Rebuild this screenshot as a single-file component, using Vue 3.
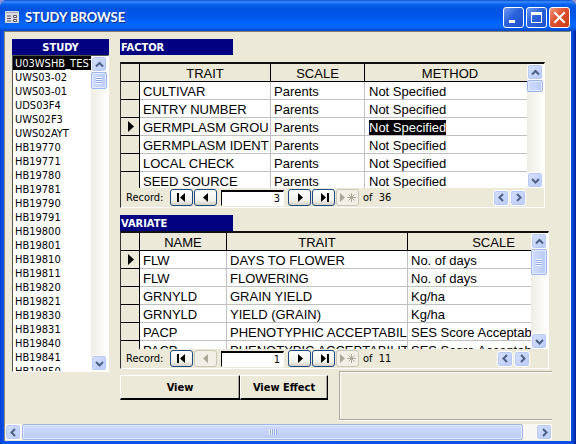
<script setup>
import { ref } from 'vue'

const studies = [
  'U03WSHB_TEST', 'UWS03-02', 'UWS03-01', 'UDS03F4', 'UWS02F3', 'UWS02AYT',
  'HB19770', 'HB19771', 'HB19780', 'HB19781', 'HB19790', 'HB19791', 'HB19800',
  'HB19801', 'HB19810', 'HB19811', 'HB19820', 'HB19821', 'HB19830', 'HB19831',
  'HB19840', 'HB19841', 'HB19850',
]
const study = ref(studies[0])

const grids = [
  {
    id: 'factor',
    title: 'FACTOR',
    columns: ['TRAIT', 'SCALE', 'METHOD'],
    rows: [
      ['CULTIVAR', 'Parents', 'Not Specified'],
      ['ENTRY NUMBER', 'Parents', 'Not Specified'],
      ['GERMPLASM GROU', 'Parents', 'Not Specified'],
      ['GERMPLASM IDENT', 'Parents', 'Not Specified'],
      ['LOCAL CHECK', 'Parents', 'Not Specified'],
      ['SEED SOURCE', 'Parents', 'Not Specified'],
    ],
    current: 2,
    selectedCell: 2,
    record: '3',
    total: 36,
    canGoBack: true,
  },
  {
    id: 'variate',
    title: 'VARIATE',
    columns: ['NAME', 'TRAIT', 'SCALE'],
    rows: [
      ['FLW', 'DAYS TO FLOWER', 'No. of days'],
      ['FLW', 'FLOWERING', 'No. of days'],
      ['GRNYLD', 'GRAIN YIELD', 'Kg/ha'],
      ['GRNYLD', 'YIELD (GRAIN)', 'Kg/ha'],
      ['PACP', 'PHENOTYPHIC ACCEPTABIL', 'SES Score Acceptab'],
      ['PACP', 'PHENOTYPIC ACCEPTABILIT', 'SES Score Acceptab'],
    ],
    current: 0,
    selectedCell: -1,
    record: '1',
    total: 11,
    canGoBack: false,
  },
]
</script>

<template>
  <main class="window">
    <header class="titlebar">
      <svg class="app-icon" viewBox="0 0 14 12" aria-hidden="true">
        <rect width="14" height="12" rx="1" fill="#dcdce0" />
        <path d="M1 1.500h12" stroke="#a4a4b4" />
        <path d="M2 5h4M2 7.500h4M2 10h4" stroke="#55556a" />
        <path d="M8.500 4.500h3v2h-3zM8.500 8.500h3v2h-3z" stroke="#55556a" fill="#fff" />
      </svg>
      <h1>STUDY BROWSE</h1>
      <div class="caption-buttons">
        <button type="button" aria-label="Minimize">
          <svg viewBox="0 0 17 17"><path d="M4 11h6v3H4z" fill="#fff" /></svg>
        </button>
        <button type="button" aria-label="Maximize">
          <svg viewBox="0 0 17 17"><path d="M3 3h11v11H3zM4 6v7h9V6z" fill="#fff" fill-rule="evenodd" /></svg>
        </button>
        <button type="button" class="close" aria-label="Close">
          <svg viewBox="0 0 17 17"><path d="M4 4l9 9M13 4l-9 9" stroke="#fff" stroke-width="2" stroke-linecap="square" /></svg>
        </button>
      </div>
    </header>

    <div class="client">
      <div class="columns">
        <section class="study">
          <label class="caption centered" for="study-list">STUDY</label>
          <div class="listbox">
            <select id="study-list" v-model="study" size="22">
              <option v-for="name in studies" :key="name" :value="name">{{ name }}</option>
            </select>
            <div class="vbar">
              <button type="button" class="arrow" aria-label="Scroll up">
                <svg viewBox="0 0 9 9"><path d="M1 6.500L4.500 3L8 6.500" /></svg>
              </button>
              <div class="thumb study-thumb"><i></i></div>
              <button type="button" class="arrow last" aria-label="Scroll down">
                <svg viewBox="0 0 9 9"><path d="M1 3L4.500 6.500L8 3" /></svg>
              </button>
            </div>
          </div>
        </section>

        <div class="details">
          <section v-for="grid in grids" :key="grid.id" :class="['sheet', grid.id]">
            <h2 class="caption">{{ grid.title }}</h2>
            <div class="grid-frame">
              <div class="grid-area">
                <div class="viewport">
                  <table :aria-label="grid.title">
                    <colgroup>
                      <col class="c-mark" />
                      <col class="c-one" />
                      <col class="c-two" />
                      <col class="c-three" />
                    </colgroup>
                    <thead>
                      <tr>
                        <th></th>
                        <th v-for="c in grid.columns" :key="c" scope="col">{{ c }}</th>
                      </tr>
                    </thead>
                    <tbody>
                      <tr v-for="(row, r) in grid.rows" :key="r">
                        <td class="mark">
                          <svg v-if="r === grid.current" viewBox="0 0 6 11"><path d="M0 0L6 5.500L0 11z" /></svg>
                        </td>
                        <td v-for="(cell, c) in row" :key="c">
                          <span :class="{ picked: r === grid.current && c === grid.selectedCell }">{{ cell }}</span>
                        </td>
                      </tr>
                    </tbody>
                  </table>
                </div>
                <div class="vbar">
                  <button type="button" class="arrow" aria-label="Scroll up">
                    <svg viewBox="0 0 9 9"><path d="M1 6.500L4.500 3L8 6.500" /></svg>
                  </button>
                  <div class="thumb"><i></i></div>
                  <button type="button" class="arrow last" aria-label="Scroll down">
                    <svg viewBox="0 0 9 9"><path d="M1 3L4.500 6.500L8 3" /></svg>
                  </button>
                </div>
              </div>
              <div class="recordbar">
                <label :for="grid.id + '-record'">Record:</label>
                <button type="button" class="nav" aria-label="First record">
                  <svg viewBox="0 0 14 9"><path d="M2 0h2v9H2zM10 0v9L5 4.500z" /></svg>
                </button>
                <button type="button" class="nav" aria-label="Previous record" :disabled="!grid.canGoBack">
                  <svg viewBox="0 0 14 9"><path d="M9 0v9L4 4.500z" /></svg>
                </button>
                <input :id="grid.id + '-record'" type="text" :value="grid.record" />
                <button type="button" class="nav" aria-label="Next record">
                  <svg viewBox="0 0 14 9"><path d="M5 0v9L10 4.500z" /></svg>
                </button>
                <button type="button" class="nav" aria-label="Last record">
                  <svg viewBox="0 0 14 9"><path d="M4 0v9L9 4.500zM10 0h2v9h-2z" /></svg>
                </button>
                <button type="button" class="nav" aria-label="New record" disabled>
                  <svg class="wide" viewBox="0 0 18 9">
                    <path d="M1 0v9L6 4.500z" />
                    <path d="M12.500 0v9M8 4.500h9M9.500 1.500l6 6M15.500 1.500l-6 6" fill="none" stroke="#aca899" />
                  </svg>
                </button>
                <span class="total">of&nbsp; {{ grid.total }}</span>
                <div class="hbuttons">
                  <button type="button" class="arrow" aria-label="Scroll left">
                    <svg viewBox="0 0 9 9"><path d="M6 1L2.500 4.500L6 8" /></svg>
                  </button>
                  <button type="button" class="arrow" aria-label="Scroll right">
                    <svg viewBox="0 0 9 9"><path d="M3 1L6.500 4.500L3 8" /></svg>
                  </button>
                </div>
              </div>
            </div>
          </section>

          <div class="actions">
            <div class="commands">
              <button type="button" class="view">View</button>
              <button type="button" class="effect">View Effect</button>
            </div>
            <div class="panel"></div>
          </div>
        </div>
      </div>

      <div class="hbar">
        <button type="button" class="arrow" aria-label="Scroll left">
          <svg viewBox="0 0 9 9"><path d="M6 1L2.500 4.500L6 8" /></svg>
        </button>
        <div class="thumb"><i></i></div>
        <button type="button" class="arrow" aria-label="Scroll right">
          <svg viewBox="0 0 9 9"><path d="M3 1L6.500 4.500L3 8" /></svg>
        </button>
      </div>
    </div>
  </main>
</template>

<style>
body {
  margin: 0;
  background: #8f92cf;
}
</style>

<style scoped>
* {
  box-sizing: border-box;
}
.window {
  display: flex;
  flex-direction: column;
  min-height: 100vh;
  overflow: hidden;
  border-radius: 7px 7px 0 0;
  background: linear-gradient(90deg, #0a3fd8 0, #0a56ea 4px, #0a4fe4 calc(100% - 4px), #001f9c 100%);
  font-family: "DejaVu Sans Condensed", "DejaVu Sans", sans-serif;
  font-size: 11px;
  color: #000;
}
button {
  margin: 0;
  padding: 0;
  font: inherit;
  color: inherit;
}
svg {
  display: block;
}

/* Title bar */
.titlebar {
  display: flex;
  align-items: center;
  height: 31px;
  padding: 3px 6px 0 5px;
  background: linear-gradient(#0a4fd0 0, #3a8cff 2px, #0a66ee 4px, #0054e3 8px, #0056e8 16px, #0066ff 24px, #0064fa 27px, #0048c8 31px);
}
.app-icon {
  width: 14px;
  height: 12px;
}
h1 {
  flex: 1;
  margin: 0 0 0 6px;
  font: bold 13px/16px Lato, sans-serif;
  color: #fff;
  text-shadow: 1px 1px 0 #0a2f8a;
}
.caption-buttons {
  display: flex;
  gap: 2px;
}
.caption-buttons button {
  display: grid;
  place-items: center;
  width: 21px;
  height: 21px;
  border: 1px solid #fff;
  border-radius: 3px;
  background: linear-gradient(135deg, #6f9bf5, #2a62dc 45%, #1f50cc);
}
.caption-buttons .close {
  background: linear-gradient(135deg, #f0987c, #de5030 45%, #c83c14);
}
.caption-buttons svg {
  width: 17px;
  height: 17px;
}

/* Client area */
.client {
  display: flex;
  flex: 1;
  flex-direction: column;
  margin: 0 5px 3px 4px;
  padding-bottom: 1px;
  border-top: 1px solid #7f7d73;
  border-left: 1px solid #8a8778;
  border-right: 1px solid #fff;
  background: #ece9d8;
}
.columns {
  display: flex;
  flex: 1;
  gap: 11px;
  padding: 7px 18px 4px 7px;
}
.caption {
  display: block;
  width: 113px;
  height: 16px;
  margin: 0;
  padding-left: 1px;
  background: #000080;
  font: bold 11px/17px "DejaVu Sans Condensed", "DejaVu Sans", sans-serif;
  color: #fff;
}
.caption.centered {
  width: auto;
  padding: 0;
  text-align: center;
}

/* Study list */
.study {
  width: 97px;
}
.listbox {
  display: flex;
  height: 317px;
  border: 1px solid #fff;
  border-top-color: #55534a;
  border-left-color: #55534a;
  background: #fff;
}
select {
  flex: 1;
  min-width: 0;
  height: 100%;
  padding: 0;
  border: 0;
  border-radius: 0;
  outline: 0;
  overflow: hidden;
  scrollbar-width: none;
  background: #fff;
  font: inherit;
}
option {
  height: 14px;
  min-height: 14px;
  padding: 1px 0 0 2px;
  line-height: 13px;
  overflow: hidden;
  color: #000;
}
option:checked {
  background: linear-gradient(#000, #000);
  -webkit-text-fill-color: #fff;
}

/* Scroll bars */
.vbar {
  display: flex;
  flex-direction: column;
  flex: none;
  width: 17px;
  background: linear-gradient(90deg, #eeede5, #fefefb);
}
.arrow {
  display: grid;
  place-items: center;
  flex: none;
  width: 16px;
  height: 16px;
  border: 1px solid #fff;
  border-radius: 3px;
  background: linear-gradient(135deg, #d6e0fd, #b9cbf8);
  box-shadow: inset 0 0 0 1px #b7c9f6;
}
.arrow svg {
  width: 9px;
  height: 9px;
}
.arrow path {
  fill: none;
  stroke: #4d6185;
  stroke-width: 2;
}
.arrow.last {
  margin-top: auto;
}
.thumb {
  display: grid;
  place-items: center;
  width: 16px;
  height: 12px;
  border: 1px solid #9db4ee;
  border-radius: 2px;
  background: linear-gradient(90deg, #d0dcfe, #b9cbfa);
  box-shadow: inset 0 0 0 1px #e3ebff;
}
.thumb i {
  width: 6px;
  height: 7px;
  background: repeating-linear-gradient(#f4f7ff 0 1px, #8fa9e6 1px 2px);
}
.study-thumb {
  height: 17px;
}
.factor .thumb i {
  display: none;
}
.variate .thumb {
  height: 26px;
}

/* Data sheets */
.details {
  flex: 1;
  min-width: 0;
}
.factor .grid-frame {
  margin: 7px 7px 7px 0;
}
.variate .grid-frame {
  margin: 0 3px 2px 0;
}
.grid-frame {
  border: 1px solid #fff;
  border-top: 2px solid #111;
  border-left-color: #333;
}
.grid-area {
  display: flex;
  height: 124px;
}
.variate .grid-area {
  height: 116px;
}
.viewport {
  flex: 1;
  min-width: 0;
  overflow: hidden;
  background: #fff;
}
table {
  width: calc(100% + 8px);
  table-layout: fixed;
  border-collapse: separate;
  border-spacing: 0;
  font: 13px/15px "Liberation Sans", Arial, sans-serif;
}
.variate table {
  width: calc(100% + 48px);
}
.c-mark {
  width: 19px;
}
.c-one {
  width: 131px;
}
.c-two {
  width: 94px;
}
.variate .c-one {
  width: 87px;
}
.variate .c-two {
  width: 181px;
}
th,
td {
  height: 18px;
  padding: 2px 0 0 3px;
  overflow: hidden;
  border-right: 1px solid #c0c0c0;
  border-bottom: 1px solid #c0c0c0;
  white-space: nowrap;
  text-align: left;
}
th {
  padding: 1px 0 0;
  border-color: #000;
  background: #ece9d8;
  font-weight: normal;
  text-align: center;
}
.mark {
  padding: 0 0 0 7px;
  border-color: #000;
  background: #ece9d8;
}
.mark svg {
  width: 6px;
  height: 11px;
}
th:last-child,
td:last-child {
  border-right: 0;
}
.picked {
  display: inline-block;
  height: 15px;
  vertical-align: top;
  background: #000;
  color: #fff;
}
.factor td:last-child {
  padding-left: 4px;
}

/* Record navigation */
.recordbar {
  display: flex;
  align-items: center;
  height: 19px;
  padding-right: 18px;
}
.recordbar label {
  width: 49px;
  padding-left: 5px;
  white-space: nowrap;
}
.nav {
  display: grid;
  place-items: center;
  flex: none;
  width: 23px;
  height: 17px;
  margin-right: 1px;
  border: 1px solid #1c4a82;
  border-radius: 3px;
  background: linear-gradient(#fff, #f2f1ea 70%, #d6d0c5);
}
.nav svg {
  width: 14px;
  height: 9px;
}
.nav .wide {
  width: 18px;
}
.nav:disabled {
  border-color: #c9c7ba;
  background: #f2f0e6;
  fill: #aca899;
}
.recordbar input {
  width: 63px;
  height: 16px;
  margin: 0 4px 0 3px;
  padding: 0 3px 0 0;
  border: 1px solid #fff;
  border-top: 2px solid #000;
  border-left: 1px solid #000;
  border-radius: 0;
  outline: 0;
  background: #fff;
  font: inherit;
  text-align: right;
}
.total {
  margin-left: 3px;
}
.hbuttons {
  display: flex;
  gap: 1px;
  margin-left: auto;
}

/* Commands */
.actions {
  display: flex;
  gap: 11px;
}
.commands {
  display: flex;
  padding-top: 4px;
}
.commands button {
  height: 25px;
  border: 1px solid #fff;
  border-right: 1px solid #000;
  border-bottom: 2px solid #000;
  background: #ece9d8;
  box-shadow: inset -1px 0 0 #aca899;
  font-weight: bold;
}
.commands .view {
  width: 120px;
}
.commands .effect {
  width: 88px;
}
.panel {
  flex: 1;
  height: 49px;
  border: 1px solid #aca899;
  border-right: 0;
  box-shadow: inset 1px 1px 0 #fff, 0 1px 0 #fff;
}

.hbar {
  display: flex;
  height: 16px;
  margin-right: 18px;
  background: #f8f7f1;
}
.hbar .thumb {
  flex: 1;
  height: 16px;
  margin: 0 13px 0 1px;
  background: linear-gradient(#d0dcfe, #b9cbfa);
}
.hbar .thumb i {
  width: 8px;
  height: 6px;
  background: repeating-linear-gradient(90deg, #f4f7ff 0 1px, #8fa9e6 1px 2px);
}
</style>
